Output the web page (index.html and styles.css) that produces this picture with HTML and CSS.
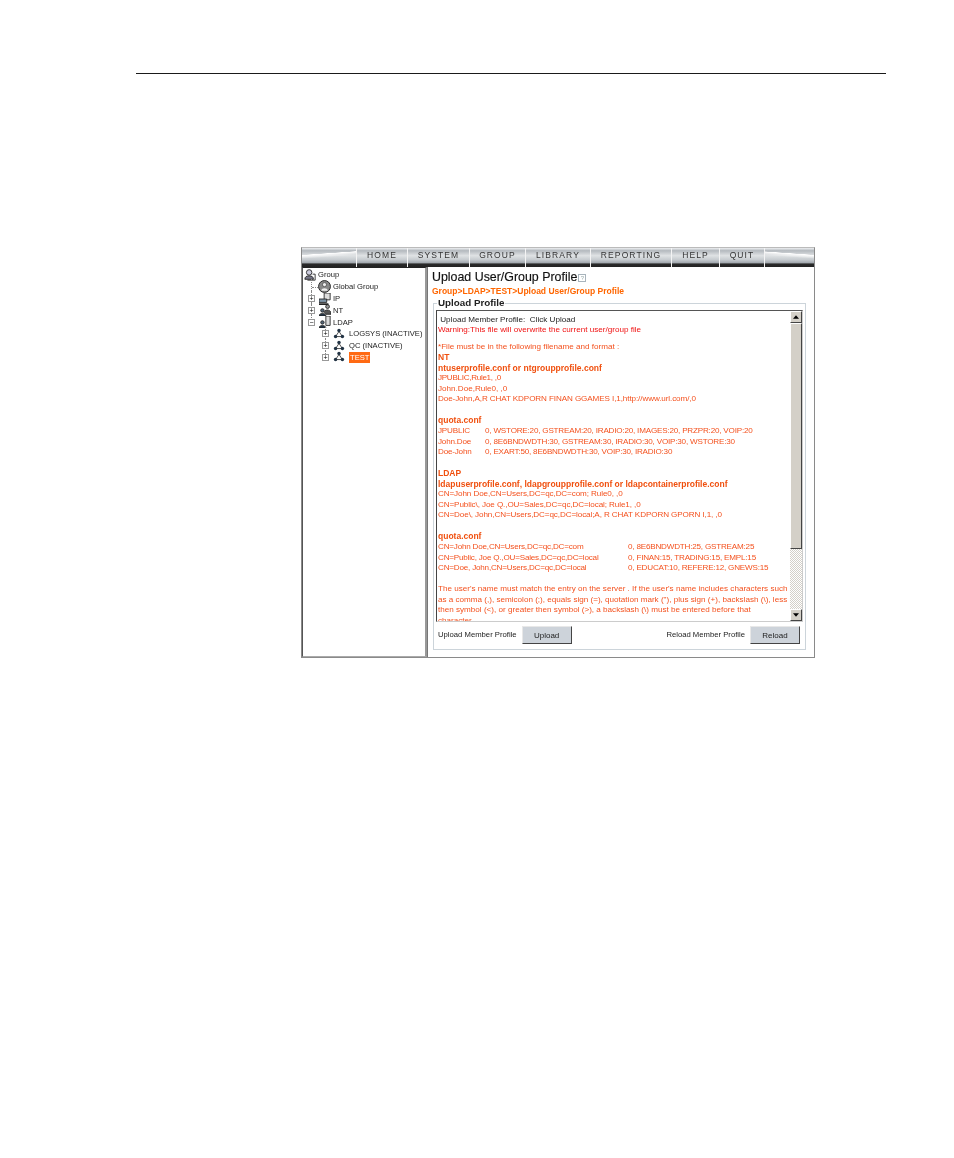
FILE: index.html
```html
<!DOCTYPE html>
<html lang="en">
<head>
<meta charset="utf-8">
<title>Upload User/Group Profile</title>
<link rel="stylesheet" href="styles.css">
</head>
<body>
<div class="rule"></div>
<div class="window">
  <nav class="nav">
    <span class="nav-start"></span>
    <a class="tab w-home">HOME</a><a class="tab w-system">SYSTEM</a><a class="tab w-group">GROUP</a><a class="tab w-library">LIBRARY</a><a class="tab w-reporting">REPORTING</a><a class="tab w-help">HELP</a><a class="tab w-quit">QUIT</a>
    <span class="nav-end"></span>
  </nav>
  <div class="main">
    <aside class="tree">
      <div class="node root"><svg class="ico" viewBox="0 0 14 14"><circle cx="6" cy="4" r="3.2" fill="#ccd" stroke="#222"/><path d="M1 12c0-3 2-4 5-4s5 1 5 4z" fill="#778" stroke="#222"/><path d="M10 6h3v7H4" fill="none" stroke="#222"/></svg><span>Group</span></div>
      <div class="node l1 global"><svg class="ico big" viewBox="0 0 14 14"><circle cx="7" cy="7" r="6.4" fill="#888" stroke="#222"/><circle cx="7" cy="5" r="2.2" fill="#eee" stroke="#222" stroke-width=".6"/><path d="M3.5 11.5c.5-3.500 6.500-3.500 7 0z" fill="#eee"/></svg><span>Global Group</span></div>
      <div class="node l1"><i class="exp">+</i><svg class="ico" viewBox="0 0 14 14"><path d="M6 0h7v8H6z" fill="#ddd" stroke="#222"/><path d="M0 7h9v4H0z" fill="#7d93a6" stroke="#222"/><path d="M0 12h11v2H0z" fill="#222"/></svg><span>IP</span></div>
      <div class="node l1"><i class="exp">+</i><svg class="ico" viewBox="0 0 14 14"><circle cx="4" cy="7.500" r="2" fill="#567" stroke="#222"/><path d="M0 14c0-4 8-4 8 0z" fill="#234" stroke="#222"/><circle cx="10" cy="3" r="2.200" fill="#999" stroke="#222"/><path d="M6 10c0-4 7-4 8 0v2H8z" fill="#555" stroke="#222"/></svg><span>NT</span></div>
      <div class="node l1 open"><i class="exp">&#8722;</i><svg class="ico" viewBox="0 0 14 14"><path d="M8 0h5v11H8z" fill="#ddd" stroke="#222"/><circle cx="4" cy="7.500" r="2" fill="#567" stroke="#222"/><path d="M0 14c0-4 8-4 8 0z" fill="#234" stroke="#222"/></svg><span>LDAP</span></div>
      <div class="node l2"><i class="exp">+</i><svg class="ico net" viewBox="0 0 14 14"><path d="M7 4L3 10M7 4l4 6M3 10h8" stroke="#333" fill="none"/><circle cx="7" cy="3" r="2" fill="#234"/><circle cx="3" cy="10" r="2" fill="#234"/><circle cx="11" cy="10" r="2" fill="#234"/></svg><span>LOGSYS (INACTIVE)</span></div>
      <div class="node l2"><i class="exp">+</i><svg class="ico net" viewBox="0 0 14 14"><path d="M7 4L3 10M7 4l4 6M3 10h8" stroke="#333" fill="none"/><circle cx="7" cy="3" r="2" fill="#234"/><circle cx="3" cy="10" r="2" fill="#234"/><circle cx="11" cy="10" r="2" fill="#234"/></svg><span>QC (INACTIVE)</span></div>
      <div class="node l2"><i class="exp">+</i><svg class="ico net" viewBox="0 0 14 14"><path d="M7 4L3 10M7 4l4 6M3 10h8" stroke="#333" fill="none"/><circle cx="7" cy="3" r="2" fill="#234"/><circle cx="3" cy="10" r="2" fill="#234"/><circle cx="11" cy="10" r="2" fill="#234"/></svg><span class="selected">TEST</span></div>
    </aside>
    <section class="content">
      <h1>Upload User/Group Profile<span class="help">?</span></h1>
      <div class="crumb">Group&gt;LDAP&gt;TEST&gt;Upload User/Group Profile</div>
      <fieldset class="panel">
        <legend>Upload Profile</legend>
        <div class="scrollbox">
          <div class="text">
            <p class="black">&nbsp;Upload Member Profile: &nbsp;Click Upload</p>
            <p class="red">Warning:This file will overwrite the current user/group file</p>
            <p class="gap-half">*File must be in the following filename and format :</p>
            <p class="b">NT</p>
            <p class="b">ntuserprofile.conf or ntgroupprofile.conf</p>
            <p class="tighter">JPUBLIC,Rule1, ,0</p>
            <p>John.Doe,Rule0, ,0</p>
            <p class="tight">Doe-John,A,R CHAT KDPORN FINAN GGAMES I,1,http://www.url.com/,0</p>
            <p>&nbsp;</p>
            <p class="b">quota.conf</p>
            <p class="quota"><span class="c1">JPUBLIC</span>0, WSTORE:20, GSTREAM:20, IRADIO:20, IMAGES:20, PRZPR:20, VOIP:20</p>
            <p class="quota"><span class="c1">John.Doe</span>0, 8E6BNDWDTH:30, GSTREAM:30, IRADIO:30, VOIP:30, WSTORE:30</p>
            <p class="quota"><span class="c1">Doe-John</span>0, EXART:50, 8E6BNDWDTH:30, VOIP:30, IRADIO:30</p>
            <p>&nbsp;</p>
            <p class="b">LDAP</p>
            <p class="b">ldapuserprofile.conf, ldapgroupprofile.conf or ldapcontainerprofile.conf</p>
            <p class="tight">CN=John Doe,CN=Users,DC=qc,DC=com; Rule0, ,0</p>
            <p class="tight">CN=Public\, Joe Q.,OU=Sales,DC=qc,DC=local; Rule1, ,0</p>
            <p class="tight">CN=Doe\, John,CN=Users,DC=qc,DC=local;A, R CHAT KDPORN GPORN I,1, ,0</p>
            <p>&nbsp;</p>
            <p class="b">quota.conf</p>
            <p class="quota"><span class="c2">CN=John Doe,CN=Users,DC=qc,DC=com</span>0, 8E6BNDWDTH:25, GSTREAM:25</p>
            <p class="quota"><span class="c2">CN=Public, Joe Q.,OU=Sales,DC=qc,DC=local</span>0, FINAN:15, TRADING:15, EMPL:15</p>
            <p class="quota"><span class="c2">CN=Doe, John,CN=Users,DC=qc,DC=local</span>0, EDUCAT:10, REFERE:12, GNEWS:15</p>
            <p>&nbsp;</p>
            <p>The user's name must match the entry on the server . If the user's name includes characters such</p>
            <p>as a comma (,), semicolon (;), equals sign (=), quotation mark ("), plus sign (+), backslash (\), less</p>
            <p>then symbol (&lt;), or greater then symbol (&gt;), a backslash (\) must be entered before that</p>
            <p>character.</p>
          </div>
          <div class="scrollbar">
            <span class="sb-btn"><svg viewBox="0 0 7 4"><path d="M3.5 0L7 4H0z"/></svg></span>
            <span class="sb-thumb"></span>
            <span class="sb-track"></span>
            <span class="sb-btn"><svg viewBox="0 0 7 4"><path d="M0 0h7L3.500 4z"/></svg></span>
          </div>
        </div>
        <div class="actions">
          <label>Upload Member Profile</label><button>Upload</button>
          <label class="push">Reload Member Profile</label><button>Reload</button>
        </div>
      </fieldset>
    </section>
  </div>
</div>
</body>
</html>
```
FILE: styles.css
```css
* { box-sizing: border-box; }
html, body { margin: 0; padding: 0; background: #fff; }
body { width: 954px; height: 1158px; overflow: hidden; font-family: "Liberation Sans", Arial, sans-serif; padding-top: 73px; }
.rule { height: 1px; background: #1a1a1a; margin: 0 68px 0 136px; }
.window { width: 514px; height: 411px; margin: 173px 0 0 301px; border: 1px solid #8a8a8a; border-top-color: #bbb; display: flex; flex-direction: column; background: #fff; filter: blur(.3px); }
.nav { height: 19px; flex: none; display: flex; background: linear-gradient(#eef0f2 0, #b4b9be 14%, #dfe2e4 40%, #c6cbcf 62%, #a2a8ae 78%, #2a2a2a 84%, #222 100%); }
.nav-start { width: 54px; background: linear-gradient(176deg, transparent 0 30%, #fff 32%, transparent 48%); }
.nav-end { flex: 1; background: linear-gradient(184deg, transparent 0 30%, #fff 32%, transparent 48%); }
.tab { display: flex; align-items: center; justify-content: center; font-size: 8.5px; letter-spacing: 1.1px; color: #333; border-left: 1px solid #f4f4f4; padding-bottom: 5px; }
.w-home { width: 51px; }
.w-system { width: 62px; }
.w-group { width: 56px; }
.w-library { width: 65px; }
.w-reporting { width: 81px; }
.w-help { width: 48px; }
.w-quit { width: 46px; border-right: 1px solid #f4f4f4; }
.main { flex: 1; display: flex; min-height: 0; }
.tree { width: 125px; flex: none; border: 1px solid #555; border-top: 1px solid #222; border-bottom: 1px solid #aaa; border-right: 2px solid #999; padding: 1px 0 0 1px; font-size: 7.6px; color: #222; }
.node { display: flex; align-items: center; height: 11.8px; gap: 2px; white-space: nowrap; position: relative; }
.l1 { padding-left: 4px; }
.global { padding-left: 14px; }
.l2 { padding-left: 18px; }
.l1::before { content: ""; position: absolute; left: 7px; top: -2px; height: 14px; border-left: 1px dotted #888; }
.open::before { height: 6px; }
.global::after { content: ""; position: absolute; left: 8px; top: 6px; width: 6px; border-top: 1px dotted #888; }
.l2::before { content: ""; position: absolute; left: 21px; top: -2px; height: 8px; border-left: 1px dotted #888; }
.exp { width: 7px; height: 7px; border: 1px solid #999; background: #fff; position: relative; z-index: 1; font-style: normal; font-size: 7px; line-height: 5px; text-align: center; color: #000; margin-right: 2px; }
.ico { width: 12px; height: 12px; flex: none; }
.ico.big { width: 13px; height: 13px; }
.ico.net { margin-right: 2px; }
.selected { background: #ff6a13; color: #fff; padding: 0 1px; height: 11px; line-height: 11px; }
.content { flex: 1; border-left: 1px solid #777; padding: 3px 0 0 4px; min-width: 0; }
h1 { margin: 0; font-size: 12.4px; line-height: 15px; font-weight: 400; color: #111; display: flex; align-items: center; -webkit-text-stroke: .15px #111; }
.help { width: 8px; height: 8px; border: 1px solid #a8b4bc; font-size: 6px; line-height: 6px; text-align: center; color: #9aa; margin-left: 1px; -webkit-text-stroke: 0; }
.crumb { font-size: 8.5px; line-height: 11px; font-weight: 700; color: #f60; white-space: nowrap; margin-top: 1px; }
.panel { margin: 1px 0 0 1px; width: 373px; height: 352px; border: 1px solid #ccd4da; padding: 0 0 0 2px; min-width: 0; }
legend { font-size: 9.8px; font-weight: 700; color: #222; padding: 0 1px; margin-left: 1px; line-height: 10px; }
.scrollbox { width: 367px; height: 312px; border: 1px solid #555; border-left: 1px solid #444; border-bottom-color: #ccc; border-right-color: #ccc; display: flex; margin-top: 2px; overflow: hidden; background: #fff; }
.text { flex: 1; padding: 3.5px 0 0 1px; font-size: 8.1px; line-height: 10.55px; color: #f4511e; min-width: 0; white-space: nowrap; overflow: hidden; }
.text p { margin: 0; }
.black { color: #222; }
.red { color: #f01010; }
.gap-half { margin-top: 6px !important; }
.b { font-weight: 700; color: #f0500f; font-size: 8.5px; }
.tight { letter-spacing: -.1px; }
.tighter { letter-spacing: -.3px; }
.quota { letter-spacing: -.2px; }
.c1 { display: inline-block; width: 47px; }
.c2 { display: inline-block; width: 190px; }
.scrollbar { width: 12px; flex: none; display: flex; flex-direction: column; background: #d4d0c8; }
.sb-btn { height: 12px; flex: none; display: flex; align-items: center; justify-content: center; background: #d4d0c8; border: 1px solid; border-color: #fff #444 #444 #fff; }
.sb-btn svg { width: 6px; height: 4px; }
.sb-thumb { height: 226px; flex: none; background: #d4d0c8; border: 1px solid; border-color: #fff #444 #444 #fff; }
.sb-track { flex: 1; background-color: #eee; background-image: repeating-conic-gradient(#d4d0c8 0 25%, #fff 0 50%); background-size: 2px 2px; }
.actions { display: flex; align-items: flex-start; padding: 4px 5px 0 2px; font-size: 7.7px; color: #222; }
.actions label { margin-right: 5px; white-space: nowrap; line-height: 18px; }
.push { margin-left: auto; }
button { width: 50px; height: 18px; padding: 0; font: inherit; font-size: 8px; color: #222; background: #cdd3da; border: 1px solid; border-color: #e8e8e8 #444 #444 #e8e8e8; }
```
